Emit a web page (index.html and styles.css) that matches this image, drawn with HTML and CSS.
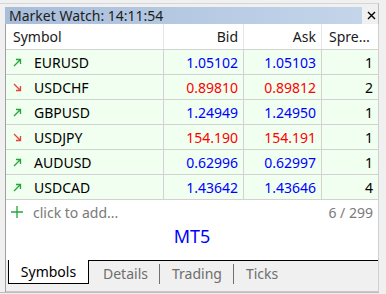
FILE: index.html
```html
<!DOCTYPE html>
<html lang="en">
<head>
  <meta charset="UTF-8">
  <title>Market Watch</title>
  <link rel="stylesheet" href="styles.css">
</head>
<body>
  <div class="frame">
    <!-- Title bar -->
    <div class="head">
      <div class="titlebar">Market Watch: 14:11:54</div>
      <div class="close">
        <svg width="9" height="9" viewBox="0 0 9 9"><path d="M1 1L8 8M8 1L1 8" stroke="#000" stroke-width="1.4"/></svg>
      </div>
    </div>

    <div class="panel">
      <div class="body">
        <!-- Quotes table -->
        <div class="row header">
          <div class="cell sym">Symbol</div>
          <div class="cell num">Bid</div>
          <div class="cell num">Ask</div>
          <div class="cell num spread">Spread</div>
        </div>
        <div class="row">
          <div class="cell sym"><svg class="arrow up" viewBox="0 0 9 9"><path d="M1 8L7.5 1.5M3 1.5H7.5V6"/></svg>EURUSD</div>
          <div class="cell num blue">1.05102</div>
          <div class="cell num blue">1.05103</div>
          <div class="cell num">1</div>
        </div>
        <div class="row">
          <div class="cell sym"><svg class="arrow down" viewBox="0 0 9 9"><path d="M1 1L7.5 7.5M3 7.5H7.5V3"/></svg>USDCHF</div>
          <div class="cell num red">0.89810</div>
          <div class="cell num red">0.89812</div>
          <div class="cell num">2</div>
        </div>
        <div class="row">
          <div class="cell sym"><svg class="arrow up" viewBox="0 0 9 9"><path d="M1 8L7.5 1.5M3 1.5H7.5V6"/></svg>GBPUSD</div>
          <div class="cell num blue">1.24949</div>
          <div class="cell num blue">1.24950</div>
          <div class="cell num">1</div>
        </div>
        <div class="row">
          <div class="cell sym"><svg class="arrow down" viewBox="0 0 9 9"><path d="M1 1L7.5 7.5M3 7.5H7.5V3"/></svg>USDJPY</div>
          <div class="cell num red">154.190</div>
          <div class="cell num red">154.191</div>
          <div class="cell num">1</div>
        </div>
        <div class="row">
          <div class="cell sym"><svg class="arrow up" viewBox="0 0 9 9"><path d="M1 8L7.5 1.5M3 1.5H7.5V6"/></svg>AUDUSD</div>
          <div class="cell num blue">0.62996</div>
          <div class="cell num blue">0.62997</div>
          <div class="cell num">1</div>
        </div>
        <div class="row">
          <div class="cell sym"><svg class="arrow up" viewBox="0 0 9 9"><path d="M1 8L7.5 1.5M3 1.5H7.5V6"/></svg>USDCAD</div>
          <div class="cell num blue">1.43642</div>
          <div class="cell num blue">1.43646</div>
          <div class="cell num">4</div>
        </div>

        <!-- Add symbol row -->
        <div class="add-row">
          <span class="add">
            <svg width="12" height="12" viewBox="0 0 12 12"><path d="M6 0V12M0 6H12" stroke="#22a63a" stroke-width="1.3"/></svg>
            click to add...
          </span>
          <span class="count">6 / 299</span>
        </div>
        <div class="brand">MT5</div>
      </div>

      <!-- Tabs -->
      <div class="tabs">
        <div class="tab-edge"></div>
        <div class="tab active">Symbols</div>
        <div class="tab-rest">
          <div class="tab">Details</div>
          <div class="tab">Trading</div>
          <div class="tab">Ticks</div>
        </div>
      </div>
    </div>
  </div>
</body>
</html>
```

FILE: styles.css
```css
/* General */
body {
  margin: 0;
  background: #f0f0f0;
  font-family: "Noto Sans", sans-serif;
  color: #000;
}

.frame {
  margin-top: 3px;
  margin-left: -5px;
  width: 373px;
  height: 285px;
  padding: 3px 0 0 10px;
  border-top: 1px solid #d6d6d6;
  border-right: 1px solid #bdbdbd;
  border-bottom: 1px solid #bdbdbd;
}

/* Title bar */
.head {
  display: flex;
  height: 17px;
}

.titlebar {
  width: 353px;
  padding-left: 4px;
  background: linear-gradient(to right, #a7bdda, #c4d5ea);
  font-size: 14px;
  line-height: 17px;
  color: #1e1e1e;
}

.close {
  flex: 1;
  display: flex;
  align-items: center;
  justify-content: center;
  padding-left: 2px;
}

/* Panel */
.panel {
  width: 372px;
  border-left: 1px solid #a0a0a0;
  border-right: 1px solid #d0d0d0;
  height: 268px;
  display: flex;
  flex-direction: column;
}

.body {
  background: #fff;
  height: 236px;
}

.row {
  display: grid;
  grid-template-columns: 157px 80px 78px 57px;
  height: 24px;
  border-bottom: 1px solid #d2d2d2;
  background: #f0fff0;
  font-size: 14px;
}

.row.header {
  height: 25px;
  background: #fff;
  color: #1a1a1a;
}

.cell {
  display: flex;
  align-items: center;
  white-space: nowrap;
  overflow: hidden;
}

.cell.sym {
  padding-left: 7px;
}

.cell.num {
  justify-content: flex-end;
  padding-right: 5px;
  border-left: 1px solid #d2d2d2;
}

.header .cell.num {
  border-left-color: #e6e6e6;
}

.cell.spread {
  display: block;
  line-height: 25px;
  text-align: right;
  text-overflow: ellipsis;
  padding-left: 7px;
}

.blue { color: #0000ff; }
.red { color: #ff0000; }

.arrow {
  width: 9px;
  height: 9px;
  margin-right: 12px;
  fill: none;
  stroke-width: 1.3;
}

.arrow.up { stroke: #22a63a; }
.arrow.down { stroke: #e5443a; }

/* Footer */
.add-row {
  display: flex;
  justify-content: space-between;
  align-items: center;
  height: 24px;
  padding: 0 5px;
  font-size: 14px;
  color: #7a7a7a;
}

.add {
  display: flex;
  align-items: center;
  gap: 10px;
}

.brand {
  text-align: center;
  font-size: 18px;
  line-height: 24px;
  color: #0000ff;
}

/* Tabs */
.tabs {
  flex: 1;
  display: flex;
  align-items: flex-start;
  background: #f0f0f0;
  border-bottom: 1px solid #c8c8c8;
  font-size: 14px;
}

.tab-edge {
  width: 2px;
}

.tab.active {
  width: 79px;
  height: 23px;
  line-height: 23px;
  text-align: center;
  background: #fff;
  border: 1px solid #000;
  border-top: none;
  color: #000;
}

.tab-rest {
  flex: 1;
  display: flex;
  border-top: 1px solid #000;
  padding-top: 3px;
  color: #6e6e6e;
}

.tab-rest .tab {
  height: 20px;
  line-height: 20px;
  padding: 0 11px 0 12px;
}

.tab-rest .tab:first-child {
  padding-left: 14px;
}

.tab-rest .tab + .tab {
  border-left: 1px solid #707070;
}
```
